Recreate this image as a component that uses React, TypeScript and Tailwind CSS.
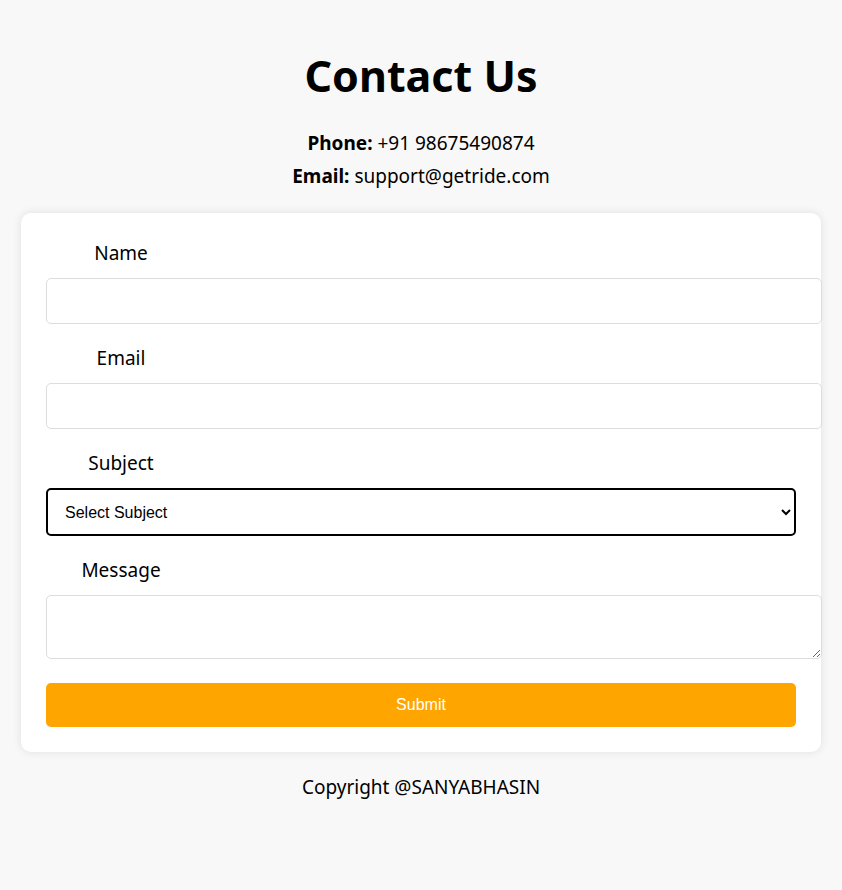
import { useState } from "react";

const subjects = ["Booking Issue", "Payment", "Feedback", "Other"];

const fields = [
  { id: "name", label: "Name", type: "text" },
  { id: "email", label: "Email", type: "email" },
];

const App = () => {
  const [subject, setSubject] = useState("");

  return (
    <div className="min-h-[890px] bg-[#f8f8f8] pt-[50px] text-black font-['Noto_Sans',sans-serif]">
      {/* Header */}
      <h1 className="text-center text-[43px] leading-[52px] font-bold">Contact Us</h1>
      <div className="mt-[25px] text-center text-[19px] leading-[33px]">
        <p>
          <span className="font-bold">Phone:</span> +91 98675490874
        </p>
        <p>
          <span className="font-bold">Email:</span> support@getride.com
        </p>
      </div>

      {/* Form card */}
      <form
        onSubmit={(e) => e.preventDefault()}
        className="mx-auto mt-[20px] w-[800px] rounded-[10px] bg-white p-[25px] shadow-[0_0_10px_rgba(0,0,0,0.1)]"
      >
        {fields.map((f) => (
          <div key={f.id} className="mb-[19px]">
            <label htmlFor={f.id} className="mb-[10px] block w-[150px] text-center text-[19px] leading-[30px]">
              {f.label}
            </label>
            <input
              id={f.id}
              type={f.type}
              className="box-content block h-[20px] w-full rounded-[5px] border border-[#ddd] px-3 py-3 text-[16px] outline-none"
            />
          </div>
        ))}

        <div className="mb-[19px]">
          <label htmlFor="subject" className="mb-[10px] block w-[150px] text-center text-[19px] leading-[30px]">
            Subject
          </label>
          <select
            id="subject"
            value={subject}
            onChange={(e) => setSubject(e.target.value)}
            className="block h-[48px] w-full rounded-[5px] border-2 border-black bg-white px-[13px] text-[16px] font-['Liberation_Sans',Arial,sans-serif]"
          >
            <option value="">Select Subject</option>
            {subjects.map((s) => (
              <option key={s} value={s}>
                {s}
              </option>
            ))}
          </select>
        </div>

        <div className="mb-[24px]">
          <label htmlFor="message" className="mb-[10px] block w-[150px] text-center text-[19px] leading-[30px]">
            Message
          </label>
          <textarea
            id="message"
            className="box-content block h-[38px] w-full rounded-[5px] border border-[#ddd] px-3 py-3 text-[16px] outline-none"
          />
        </div>

        <button
          type="submit"
          className="block h-[44px] w-full rounded-[5px] bg-[#ffa500] text-[16px] text-white font-['Liberation_Sans',Arial,sans-serif]"
        >
          Submit
        </button>
      </form>

      <p className="mt-[23px] text-center text-[19px] leading-[24px]">Copyright @SANYABHASIN</p>
    </div>
  );
};

export default App;
